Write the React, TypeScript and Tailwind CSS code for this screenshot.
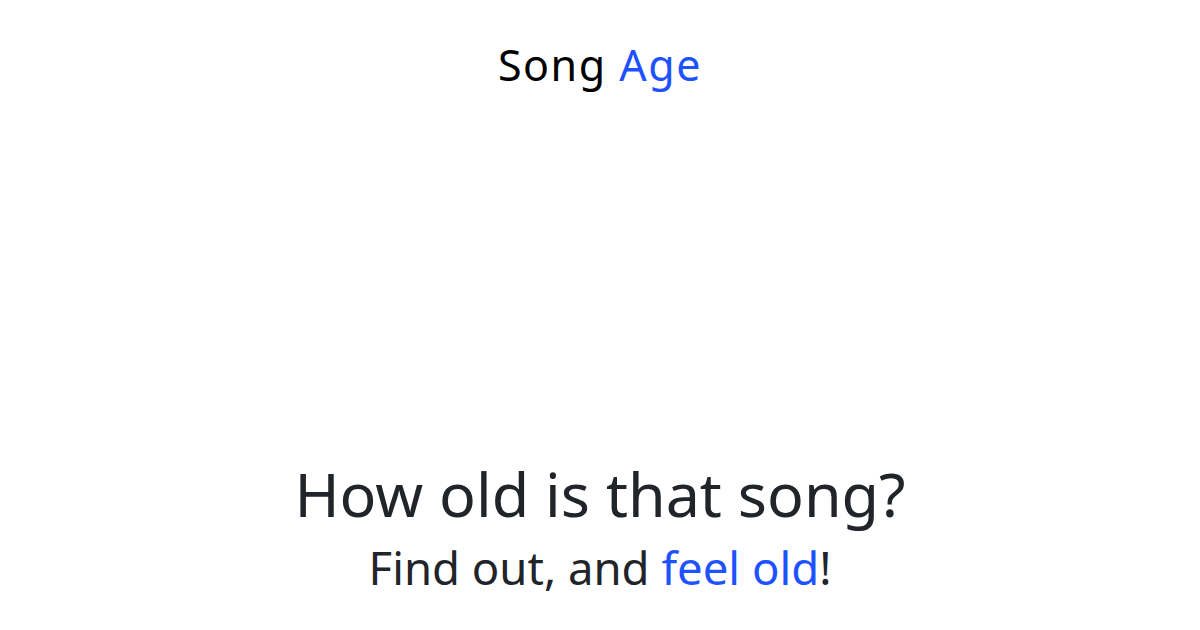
export default function App() {
  return (
    <main
      className="flex h-[630px] w-[1200px] flex-col items-center justify-between bg-white pt-[37px] pb-[35px] text-[#212529]"
      style={{ fontFamily: '"Noto Sans", "Open Sans", sans-serif' }}
    >
      <h2 className="text-[43px] leading-[56px] tracking-[1.5px] text-black">
        Song <span className="text-[#1f52ff]">Age</span>
      </h2>
      <div className="flex flex-col items-center">
        <h1 className="mb-[9px] text-[61px] leading-[72px]">How old is that song?</h1>
        <p className="text-[45.5px] leading-[56px]">
          Find out, and <span className="text-[#1f52ff]">feel old</span>!
        </p>
      </div>
    </main>
  );
}
